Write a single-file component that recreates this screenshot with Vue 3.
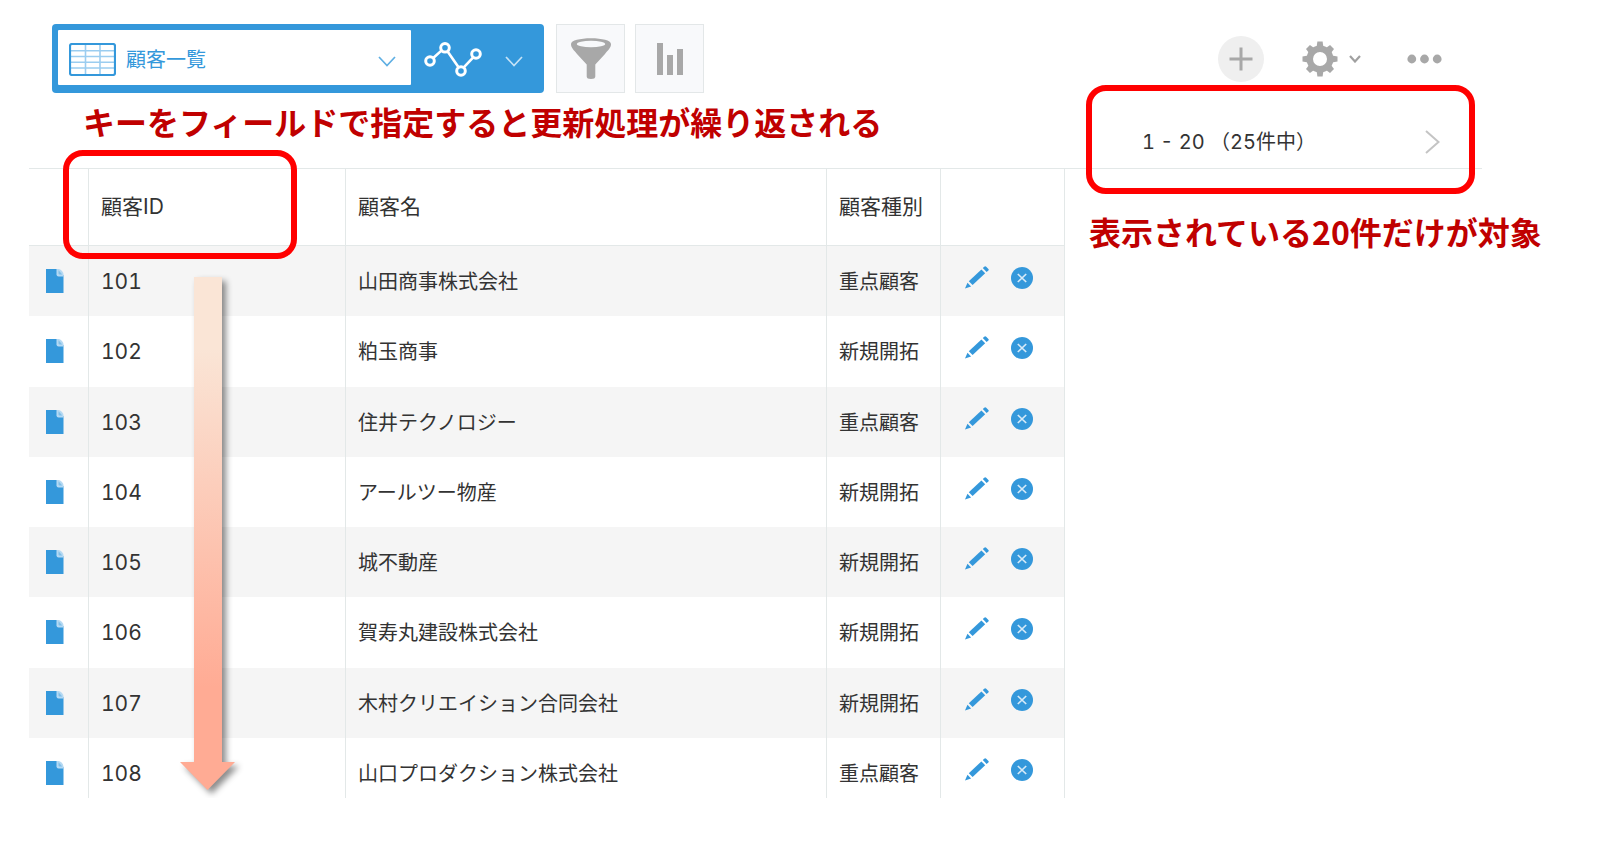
<script setup>
import { ref } from 'vue'

const view = ref('list')

const records = [
  { id: '101', name: '山田商事株式会社', type: '重点顧客' },
  { id: '102', name: '粕玉商事', type: '新規開拓' },
  { id: '103', name: '住井テクノロジー', type: '重点顧客' },
  { id: '104', name: 'アールツー物産', type: '新規開拓' },
  { id: '105', name: '城不動産', type: '新規開拓' },
  { id: '106', name: '賀寿丸建設株式会社', type: '新規開拓' },
  { id: '107', name: '木村クリエイション合同会社', type: '新規開拓' },
  { id: '108', name: '山口プロダクション株式会社', type: '重点顧客' }
]
const teeth = [0, 90, 180, 270]
const diagonalTeeth = [45, 135, 225, 315]
</script>

<template>
  <main class="page">
    <header class="toolbar">
      <div class="switcher">
        <div class="view">
          <svg class="view-icon" width="47" height="33" viewBox="0 0 47 33" aria-hidden="true">
            <path d="M2 7.8H45M2 13.5H45M2 19.2H45M2 25H45M16.5 2V31M31 2V31" stroke="#9bcdf0" stroke-width="1.6" fill="none" />
            <rect x="1" y="1" width="45" height="31" rx="2" fill="none" stroke="#3498db" stroke-width="2.2" />
          </svg>
          <select v-model="view" class="view-select" aria-label="一覧の選択">
            <option value="list">顧客一覧</option>
          </select>
          <svg class="view-arrow" width="18" height="11" viewBox="0 0 18 11" aria-hidden="true">
            <path d="M1 1 9 9.5 17 1" fill="none" stroke="#5fafe3" stroke-width="1.7" />
          </svg>
        </div>
        <button class="graph" type="button" aria-label="グラフ">
          <svg width="58" height="36" viewBox="0 0 58 36" fill="none" stroke="#fff" aria-hidden="true">
            <path d="M9.5 15.7 17.4 8.6M23.8 9.7 34.2 24.8M40 25.2 49 15.7" stroke-width="2.6" />
            <g stroke-width="3">
              <circle cx="6" cy="19" r="4.3" />
              <circle cx="21" cy="5.8" r="4.3" />
              <circle cx="37" cy="29" r="4.3" />
              <circle cx="52" cy="12" r="4.3" />
            </g>
          </svg>
          <svg class="graph-arrow" width="18" height="11" viewBox="0 0 18 11" aria-hidden="true">
            <path d="M1 1 9 9.5 17 1" fill="none" stroke="#c5e2f6" stroke-width="1.7" />
          </svg>
        </button>
      </div>
      <button class="tile" type="button" aria-label="絞り込む">
        <svg width="40" height="41" viewBox="0 0 40 41" aria-hidden="true">
          <path d="M0 6C0 2.5 9 .3 20 .3S40 2.5 40 6C40 10 37 12 34 16L24.3 26.5V38.5Q24.3 41 20 41T15.7 38.5V26.5L6 16C3 12 0 10 0 6Z" fill="#a8a8a8" />
          <ellipse cx="20" cy="6" rx="14.2" ry="3.2" fill="#f8f9fb" />
        </svg>
      </button>
      <button class="tile" type="button" aria-label="集計する">
        <svg width="26" height="32" viewBox="0 0 26 32" fill="#a8a8a8" aria-hidden="true">
          <rect width="6" height="32" />
          <rect x="10" y="12" width="6" height="20" />
          <rect x="20" y="6" width="6" height="26" />
        </svg>
      </button>
      <div class="tools">
        <button class="add" type="button" aria-label="レコードを追加">
          <svg width="24" height="24" viewBox="0 0 24 24" aria-hidden="true">
            <path d="M12 .5V23.5M.5 12H23.5" stroke="#a8a8a8" stroke-width="3" />
          </svg>
        </button>
        <button class="settings" type="button" aria-label="設定">
          <svg width="36" height="36" viewBox="-18 -18 36 36" aria-hidden="true">
            <circle r="10.2" fill="none" stroke="#a8a8a8" stroke-width="6.4" />
            <path v-for="a in teeth" :key="a" :transform="`rotate(${a})`" d="M-3.4 -12 -2.6 -17.5H2.6L3.4 -12Z" fill="#a8a8a8" />
            <path v-for="a in diagonalTeeth" :key="a" :transform="`rotate(${a})`" d="M-3.6 -12 -2.8 -17H2.8L3.6 -12Z" fill="#a8a8a8" />
          </svg>
          <svg width="12" height="8" viewBox="0 0 12 8" aria-hidden="true">
            <path d="M1 1 6 6.5 11 1" fill="none" stroke="#a0a0a0" stroke-width="2.2" />
          </svg>
        </button>
        <button class="more" type="button" aria-label="その他">
          <svg width="35" height="10" viewBox="0 0 35 10" fill="#a8a8a8" aria-hidden="true">
            <circle cx="4.8" cy="5" r="4.4" />
            <circle cx="17.5" cy="5" r="4.4" />
            <circle cx="30.2" cy="5" r="4.4" />
          </svg>
        </button>
      </div>
    </header>

    <div class="subbar">
      <p class="note">キーをフィールドで指定すると更新処理が繰り返される</p>
      <nav class="pager" aria-label="ページ送り">
        <span>1 - 20 （25件中）</span>
        <button type="button" aria-label="次へ">
          <svg width="15" height="24" viewBox="0 0 15 24" aria-hidden="true">
            <path d="M1 1 13.5 12 1 23" fill="none" stroke="#c4c4c4" stroke-width="2" />
          </svg>
        </button>
        <span class="highlight around-pager"></span>
      </nav>
    </div>

    <section class="content">
      <div class="records">
        <table>
          <colgroup>
            <col class="c-open" />
            <col class="c-id" />
            <col />
            <col class="c-type" />
            <col class="c-actions" />
          </colgroup>
          <thead>
            <tr>
              <th></th>
              <th class="key">顧客ID<span class="highlight around-key"></span></th>
              <th>顧客名</th>
              <th>顧客種別</th>
              <th></th>
            </tr>
          </thead>
          <tbody>
            <tr v-for="r in records" :key="r.id">
              <td class="open">
                <a href="#" :aria-label="`${r.name}の詳細`">
                  <svg width="18" height="24" viewBox="0 0 18 24" aria-hidden="true">
                    <path d="M0 0H11.5L17.5 6.5V24H0Z" fill="#3498db" />
                    <path d="M10.5 0H13Q17.5 2 17.5 5.5V7.5H12.5Q10.5 7.5 10.5 5.5Z" fill="#b5d9f3" />
                    <path d="M12.5 1.2 16.3 5.6H13.5Q12.5 5.6 12.5 4.6Z" fill="#7fbfe9" />
                  </svg>
                </a>
              </td>
              <td class="id">{{ r.id }}</td>
              <td>{{ r.name }}</td>
              <td>{{ r.type }}</td>
              <td class="actions">
                <div>
                  <button type="button" :aria-label="`${r.name}を編集`">
                    <svg width="24" height="23" viewBox="0 0 24 23" fill="#3498db" aria-hidden="true">
                      <path d="M3.8 15.2 16.4 3.4 20.2 7.2 7.6 19Z" />
                      <path d="M0 22.5 2.5 16.8 6.1 20.4Z" />
                      <path d="M17.8 2.1 19.6.5Q20.4 0 21.2.7L23.4 2.9Q24.2 3.7 23.4 4.4L21.6 5.9Z" />
                    </svg>
                  </button>
                  <button type="button" :aria-label="`${r.name}を削除`">
                    <svg width="22" height="22" viewBox="0 0 22 22" aria-hidden="true">
                      <circle cx="11" cy="11" r="11" fill="#3498db" />
                      <path d="M6.8 7 15.2 15M15.2 7 6.8 15" stroke="#d6eaf8" stroke-width="1.7" />
                    </svg>
                  </button>
                </div>
              </td>
            </tr>
          </tbody>
        </table>
        <svg class="flow-arrow" width="72" height="526" viewBox="0 0 72 526" aria-hidden="true">
          <defs>
            <linearGradient id="flow" x1="0" y1="0" x2="0" y2="1">
              <stop offset="0" stop-color="#fae5d6" />
              <stop offset="0.14" stop-color="#fae5d6" />
              <stop offset="0.8" stop-color="#ffab94" />
              <stop offset="1" stop-color="#ffab94" />
            </linearGradient>
          </defs>
          <path d="M14 0H42V485H55L27.5 513 0 485H14Z" fill="url(#flow)" />
        </svg>
      </div>
      <p class="note side">表示されている20件だけが対象</p>
    </section>
  </main>
</template>

<style>
body {
  margin: 0;
  background: #fff;
}
</style>

<style scoped>
.page {
  padding: 24px 118px 0 29px;
  color: #333;
  font-family: Inter, "Noto Sans CJK JP", sans-serif;
  font-size: 20px;
  font-variant-numeric: tabular-nums;
  line-height: 28px;
}
button {
  display: flex;
  align-items: center;
  padding: 0;
  border: 0;
  background: none;
  cursor: pointer;
}
svg {
  display: block;
  flex: none;
}
.toolbar {
  display: flex;
  align-items: flex-start;
  padding-left: 23px;
}
.switcher {
  display: flex;
  margin-right: 12px;
  padding: 6px 0 8px 6px;
  border-radius: 4px;
  background: #3498db;
}
.view {
  position: relative;
  display: flex;
  align-items: center;
  width: 353px;
  height: 55px;
  border-radius: 1px;
  background: #fff;
}
.view-icon {
  margin: 4px 0 0 11px;
}
.view-select {
  flex: 1;
  height: 55px;
  padding: 4px 40px 0 10px;
  border: 0;
  appearance: none;
  background: transparent;
  color: #3498db;
  font: inherit;
}
.view-arrow {
  position: absolute;
  right: 15px;
  top: 26px;
  pointer-events: none;
}
.graph {
  gap: 23px;
  padding: 4px 21px 0 13px;
}
.graph-arrow {
  margin-top: 4px;
}
.tile {
  justify-content: center;
  box-sizing: border-box;
  width: 69px;
  height: 69px;
  margin-right: 10px;
  border: 1px solid #e3e7e8;
  background: #f8f9fb;
}
.tools {
  display: flex;
  align-items: center;
  margin: 12px 40px 0 auto;
}
.add {
  justify-content: center;
  width: 46px;
  height: 46px;
  border-radius: 50%;
  background: #efefef;
}
.settings {
  gap: 11px;
  margin: 0 46px 0 38px;
}
.subbar {
  display: flex;
  justify-content: space-between;
  align-items: flex-start;
  height: 75px;
  padding: 0 42px 0 54px;
}
.note {
  margin: 8px 0 0;
  color: #c00000;
  font-family: "Noto Sans CJK JP", sans-serif;
  font-size: 32px;
  font-weight: 700;
  line-height: 40px;
  white-space: nowrap;
}
.pager {
  position: relative;
  display: flex;
  justify-content: space-between;
  align-items: center;
  width: 298px;
  height: 40px;
  margin-top: 29px;
}
.highlight {
  position: absolute;
  z-index: 1;
  border: 6px solid #f00;
  border-radius: 20px;
  pointer-events: none;
}
.around-pager {
  inset: -37px -35px -32px -56px;
}
.around-key {
  inset: -19px 48px -14px -26px;
}
.content {
  display: grid;
  grid-template-columns: minmax(0, 1036px) 1fr;
  border-top: 1px solid #e3e8e8;
}
.side {
  width: 0;
  margin: 42px 0 0 24px;
}
.records {
  position: relative;
}
table {
  width: 100%;
  table-layout: fixed;
  border-collapse: separate;
  border-spacing: 0;
}
.c-open {
  width: 60px;
}
.c-id {
  width: 257px;
}
.c-type {
  width: 114px;
}
.c-actions {
  width: 124px;
}
th,
td {
  box-sizing: border-box;
  padding: 0 0 0 12px;
  border-right: 1px solid #e3e8e8;
  text-align: left;
  white-space: nowrap;
}
th {
  height: 77px;
  border-bottom: 1px solid #e3e8e8;
  font-size: 21px;
  font-weight: 400;
}
.key {
  position: relative;
}
td {
  height: 70px;
  padding-top: 22px;
  vertical-align: top;
}
tbody tr:nth-child(odd) {
  background: #f5f5f5;
}
tbody tr:nth-child(4n + 2) td {
  height: 71px;
}
tbody tr:last-child td {
  height: 60px;
}
td.id {
  font-size: 21px;
}
td.open {
  padding: 23px 0 0 17px;
}
td.open a {
  display: inline-block;
}
td.actions {
  padding: 20px 0 0 24px;
}
.actions div {
  display: flex;
  gap: 22px;
}
.flow-arrow {
  position: absolute;
  z-index: 1;
  left: 151px;
  top: 108px;
  overflow: visible;
  filter: drop-shadow(4px 4px 3px rgba(0, 0, 0, 0.45));
  pointer-events: none;
}
</style>
